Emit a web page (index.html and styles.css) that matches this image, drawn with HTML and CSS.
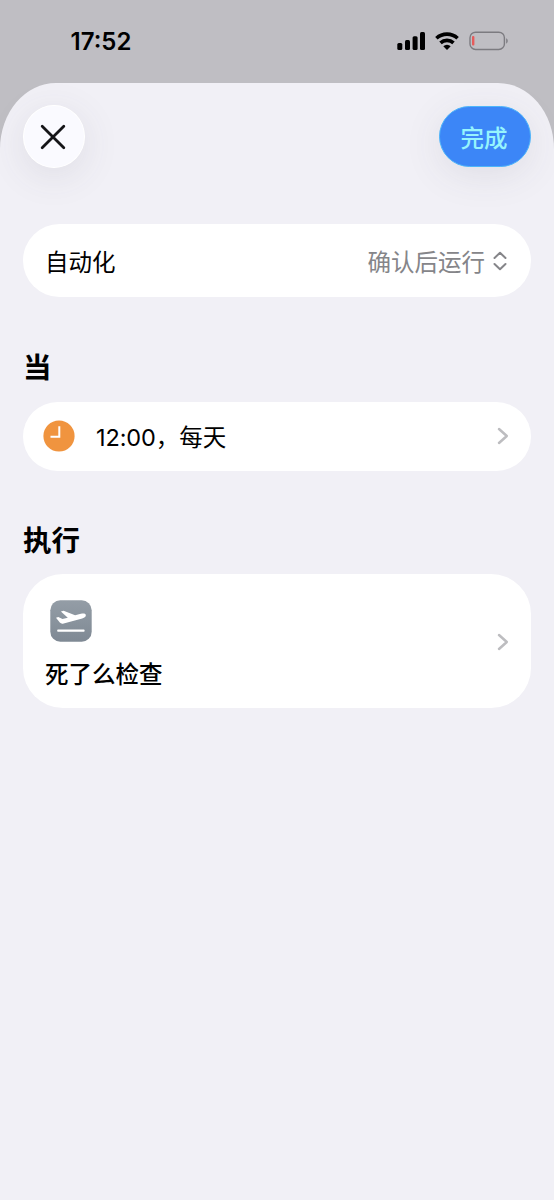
FILE: index.html
```html
<!DOCTYPE html>
<html lang="zh-CN">
<head>
<meta charset="utf-8">
<title>自动化</title>
<link rel="stylesheet" href="styles.css">
</head>
<body>
<div class="phone">
  <header class="status">
    <span class="time">17:52</span>
    <svg class="status-icons" width="112" height="20" viewBox="0 0 112 20">
      <rect x="0.3" y="12" width="5" height="7" rx="1.5"/>
      <rect x="8" y="9" width="5" height="10" rx="1.5"/>
      <rect x="15.6" y="5.2" width="5" height="13.8" rx="1.5"/>
      <rect x="23" y="1" width="5" height="18" rx="1.5"/>
      <g fill="none" stroke="#000" stroke-width="3.6">
        <path d="M39.400 7.300a15.600 15.600 0 0 1 21.200 0"/>
        <path d="M43.500 11.900a9.600 9.600 0 0 1 13 0"/>
      </g>
      <path d="M46.300 15.200a5.200 5.200 0 0 1 7.400 0L50 18.900z"/>
      <rect x="73" y="1.2" width="34.4" height="17.3" rx="5.6" fill="none" stroke="#7c7b80" stroke-width="1.4"/>
      <rect x="75" y="5" width="2.400" height="9.6" rx="1" fill="#e65b5b"/>
      <path d="M109.2 7.2c2 .8 2 4.6 0 5.4z" fill="#7c7b80"/>
    </svg>
  </header>
  <main class="sheet">
    <nav class="toolbar">
      <button class="close" aria-label="关闭">
        <svg width="26" height="26" viewBox="0 0 26 26"><path d="M2.2 2.2l21.6 21.6M23.8 2.2L2.2 23.8"/></svg>
      </button>
      <button class="done">完成</button>
    </nav>
    <section class="card mode">
      <span class="label">自动化</span>
      <span class="value">确认后运行
        <svg width="14" height="20" viewBox="0 0 14 20"><path d="M1.5 7L7 1.7 12.5 7M1.5 13L7 18.3 12.5 13"/></svg>
      </span>
    </section>
    <h2 class="when">当</h2>
    <section class="card trigger">
      <svg class="clock" width="32" height="32" viewBox="0 0 32 32"><circle cx="16" cy="16" r="15.6"/><path d="M16.3 6.2v10.5H7.5"/></svg>
      <span class="when-text"><span class="digits">12:00</span>，每天</span>
      <svg class="chevron" width="12" height="18" viewBox="0 0 12 18"><path d="M2 2l7.8 7L2 16"/></svg>
    </section>
    <h2 class="do">执行</h2>
    <section class="card action">
      <div class="action-body">
        <svg class="app-icon" width="42" height="42" viewBox="0 0 42 42">
          <defs><linearGradient id="slate" x1="0" y1="0" x2="0" y2="1"><stop offset="0" stop-color="#949da6"/><stop offset="1" stop-color="#7f8994"/></linearGradient></defs>
          <rect x=".3" y=".3" width="41.4" height="41.4" rx="10" fill="url(#slate)"/>
          <path fill="#fff" d="M6 17.700l2.300-.6 4.200 2 5.300-1.300-6.900-6.400 2.700-.6 11.500 4.500 5.800-1.600c2.400-.6 4.400-.4 4.900 1.100.4 1.600-1.100 3-3.600 3.700L13.700 23.500c-1.700.5-2.900.2-3.900-.9z"/>
          <rect x="7.2" y="29.4" width="27.4" height="2.4" rx=".8" fill="#fff"/>
        </svg>
        <strong>死了么检查</strong>
      </div>
      <svg class="chevron" width="12" height="18" viewBox="0 0 12 18"><path d="M2 2l7.8 7L2 16"/></svg>
    </section>
  </main>
</div>
</body>
</html>
```
FILE: styles.css
```css
* { box-sizing: border-box; }
body {
  margin: 0;
  background: #bfbec3;
  color: #000;
  font-family: Inter, "Noto Sans CJK SC", sans-serif;
  font-size: 23.5px;
}
svg { display: block; flex: none; }
.phone { height: 1200px; display: flex; flex-direction: column; overflow: hidden; }
.status {
  height: 83px;
  flex: none;
  display: flex;
  justify-content: space-between;
  align-items: center;
  padding: 0 45px 1px 70.5px;
}
.time { font-size: 24px; font-weight: 600; line-height: 28px; padding-top: 2px; }
.sheet {
  flex: 1;
  background: #f1f0f6;
  border-radius: 56px 56px 0 0 / 66px 66px 0 0;
  padding: 22px 23px 0;
}
.toolbar { display: flex; justify-content: space-between; align-items: center; height: 63px; }
button { border: 0; padding: 0; display: flex; align-items: center; justify-content: center; font-family: inherit; }
.close {
  width: 62px;
  height: 63px;
  border-radius: 50%;
  background: #fafaff;
  border: 1px solid #fff;
  padding-right: 2px;
  box-shadow: 0 8px 38px rgba(70, 70, 90, .11);
}
.close path { stroke: #151518; stroke-width: 2.8; stroke-linecap: round; fill: none; }
.done {
  width: 92px;
  height: 61px;
  border-radius: 31px;
  background: #3c86f7;
  border: 1px solid #4db5fa;
  color: #96f4fd;
  font-size: 23.5px;
  font-weight: 500;
  padding-right: 2px;
  box-shadow: 0 8px 38px rgba(70, 70, 90, .1);
}
.card { background: #fff; display: flex; align-items: center; justify-content: space-between; }
.mode { margin-top: 56px; height: 73px; border-radius: 36.5px; padding: 0 24px 0 22px; }
.value { color: #858589; display: flex; align-items: center; gap: 8px; }
.value path { fill: none; stroke: #858589; stroke-width: 2; stroke-linecap: round; stroke-linejoin: round; }
h2 { margin: 0; font-size: 28.5px; line-height: 40px; font-weight: 700; }
.when { margin-top: 51px; }
.trigger { margin-top: 13.5px; height: 69px; border-radius: 34.5px; padding: 0 22px 0 20px; }
.clock circle { fill: #f0943f; }
.clock path { fill: none; stroke: #fff; stroke-width: 2; }
.when-text { flex: 1; margin-left: 21px; }
.digits { letter-spacing: -.1px; }
.chevron path { fill: none; stroke: #bdbdc0; stroke-width: 2.5; stroke-linecap: round; stroke-linejoin: round; }
.do { margin-top: 50px; }
.action { margin-top: 13.5px; height: 134px; border-radius: 40px; padding: 9px 22px 0; }
.action-body { display: flex; flex-direction: column; gap: 16px; }
.action .chevron { margin-top: -8px; }
.app-icon { margin-left: 5px; }
.action strong { font-weight: 500; line-height: 34px; }
```
